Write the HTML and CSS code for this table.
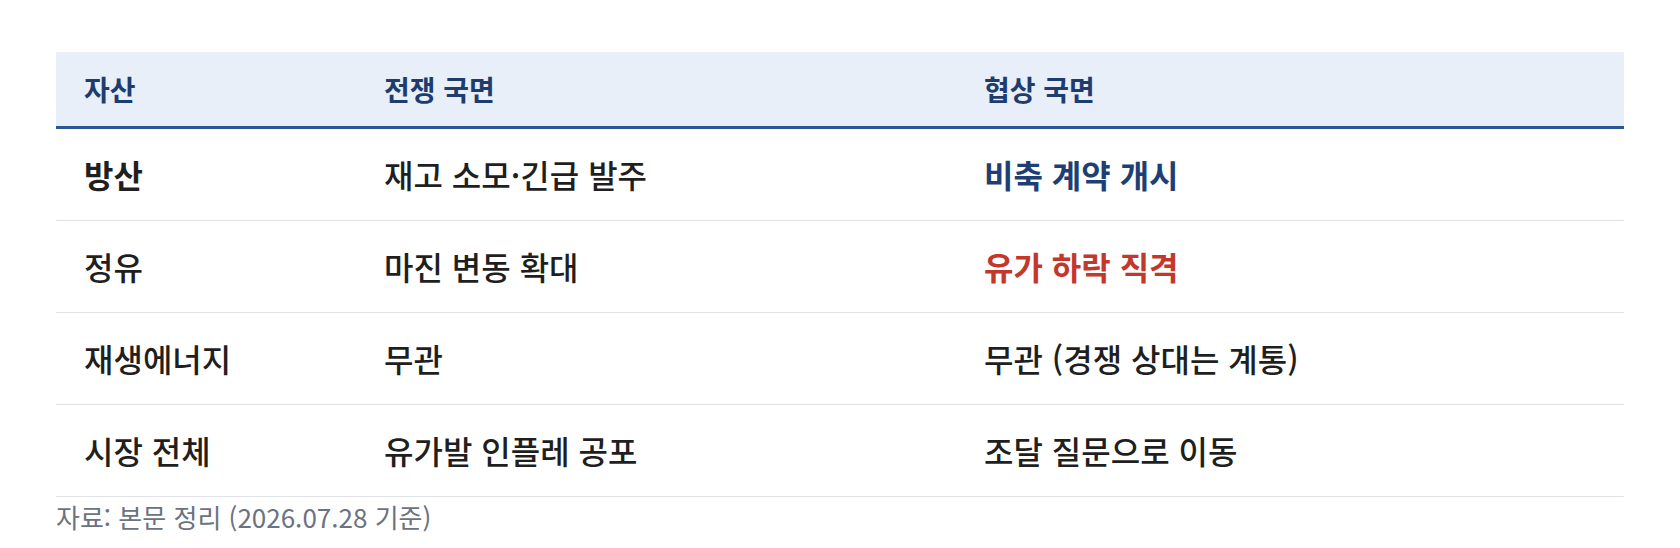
FILE: index.html
```html
<!DOCTYPE html>
<html lang="ko">
<head>
<meta charset="utf-8">
<title>자산별 영향</title>
<link rel="stylesheet" href="styles.css">
</head>
<body>
<figure class="table-wrap">
  <table class="asset-table">
    <colgroup>
      <col class="c1"><col class="c2"><col class="c3">
    </colgroup>
    <thead>
      <tr><th>자산</th><th>전쟁 국면</th><th>협상 국면</th></tr>
    </thead>
    <tbody>
      <tr><td class="strong">방산</td><td>재고 소모·긴급 발주</td><td class="hl-blue">비축 계약 개시</td></tr>
      <tr><td>정유</td><td>마진 변동 확대</td><td class="hl-red">유가 하락 직격</td></tr>
      <tr><td>재생에너지</td><td>무관</td><td>무관 (경쟁 상대는 계통)</td></tr>
      <tr><td>시장 전체</td><td>유가발 인플레 공포</td><td>조달 질문으로 이동</td></tr>
    </tbody>
  </table>
  <figcaption class="source">자료: 본문 정리 (2026.07.28 기준)</figcaption>
</figure>
</body>
</html>
```

FILE: styles.css
```css
html, body {
  margin: 0;
  padding: 0;
  background: #ffffff;
}
body {
  padding: 52px 56px 0;
  font-family: "Noto Sans CJK KR", "Noto Sans", sans-serif;
  color: #222222;
}
.table-wrap {
  margin: 0;
}
.asset-table {
  width: 100%;
  border-collapse: collapse;
  table-layout: fixed;
}
.c1 { width: 300px; }
.c2 { width: 600px; }
.asset-table th {
  background: #e8eff8;
  color: #1e3d6e;
  font-size: 28px;
  font-weight: 700;
  text-align: left;
  padding: 16px 28px;
  line-height: 42px;
  border-bottom: 3px solid #2b5597;
}
.asset-table td {
  font-size: 32px;
  font-weight: 500;
  line-height: 41px;
  padding: 25px 28px;
  border-bottom: 1px solid #e2e3e8;
  color: #1f1f1f;
}
.asset-table td.strong {
  font-weight: 700;
}
.asset-table td.hl-blue {
  color: #1e3f75;
  font-weight: 700;
}
.asset-table td.hl-red {
  color: #c2392c;
  font-weight: 700;
}
.source {
  margin-top: 4px;
  font-size: 26px;
  line-height: 32px;
  color: #6b7280;
}
```
